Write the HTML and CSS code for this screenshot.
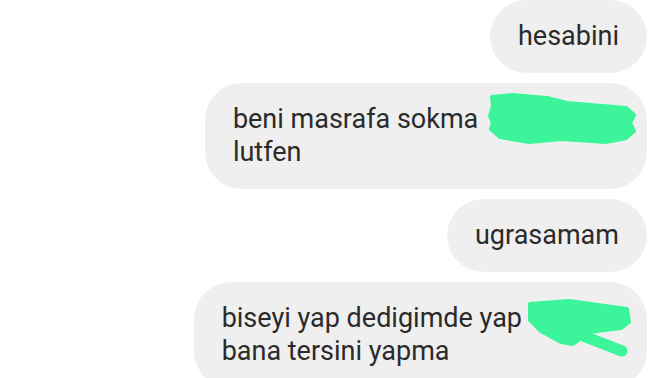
FILE: index.html
```html
<!DOCTYPE html>
<html lang="tr">
<head>
    <meta charset="UTF-8">
    <meta name="viewport" content="width=device-width, initial-scale=1.0">
    <title>Mesajlar</title>
    <link rel="stylesheet" href="styles.css">
</head>
<body>
    <div class="sohbet">
        <div class="balon">hesabini</div>

        <div class="balon">
            beni masrafa sokma <span class="isim isim-uzun"></span><br>
            lutfen
            <svg class="karalama karalama-bir" viewBox="0 0 150 52" width="150" height="52">
                <path d="M5 4 L25 2 L60 5 L80 10 L139 15 L147 22 L143 30 L147 38 L139 45 L119 49 L75 46 L42 49 L13 44 L4 36 L6 30 L3 23 L6 13 Z"/>
            </svg>
        </div>

        <div class="balon">ugrasamam</div>

        <div class="balon">
            biseyi yap dedigimde yap<span class="isim isim-kisa"></span><br>
            bana tersini yapma
            <svg class="karalama karalama-iki" viewBox="0 0 108 62" width="108" height="62">
                <path d="M5 6 L44 3 L102 11 L104 24 L96 30 L64 34 L48 46 L36 44 L16 33 L5 22 Z"/>
                <line x1="48" y1="34" x2="97" y2="53"/>
            </svg>
        </div>
    </div>
</body>
</html>
```

FILE: styles.css
```css
body {
    margin: 0;
    background-color: #fff;
    font-family: Roboto, 'Noto Sans', sans-serif;
    overflow: hidden;
}

.sohbet {
    display: flex;
    flex-direction: column;
    align-items: flex-end; /* mesajlar sagda */
    gap: 10px;
    padding-right: 25px;
}

.balon {
    position: relative;
    background-color: #efefef;
    color: #2b2b2b;
    font-size: 27px;
    line-height: 33px;
    padding: 20px 28px;
    border-radius: 37px;
}

.isim {
    display: inline-block;
    height: 1px;
}

.isim-uzun {
    width: 134px;
}

.isim-kisa {
    width: 97px;
}

/* ismi kapatan yesil kalem */
.karalama {
    position: absolute;
    fill: #3cf59b;
    stroke: #3cf59b;
    stroke-width: 4;
    stroke-linejoin: round;
    stroke-linecap: round;
}

.karalama line {
    stroke-width: 11;
}

.karalama-bir {
    top: 10px;
    right: 10px;
}

.karalama-iki {
    top: 16px;
    right: 14px;
}
```
